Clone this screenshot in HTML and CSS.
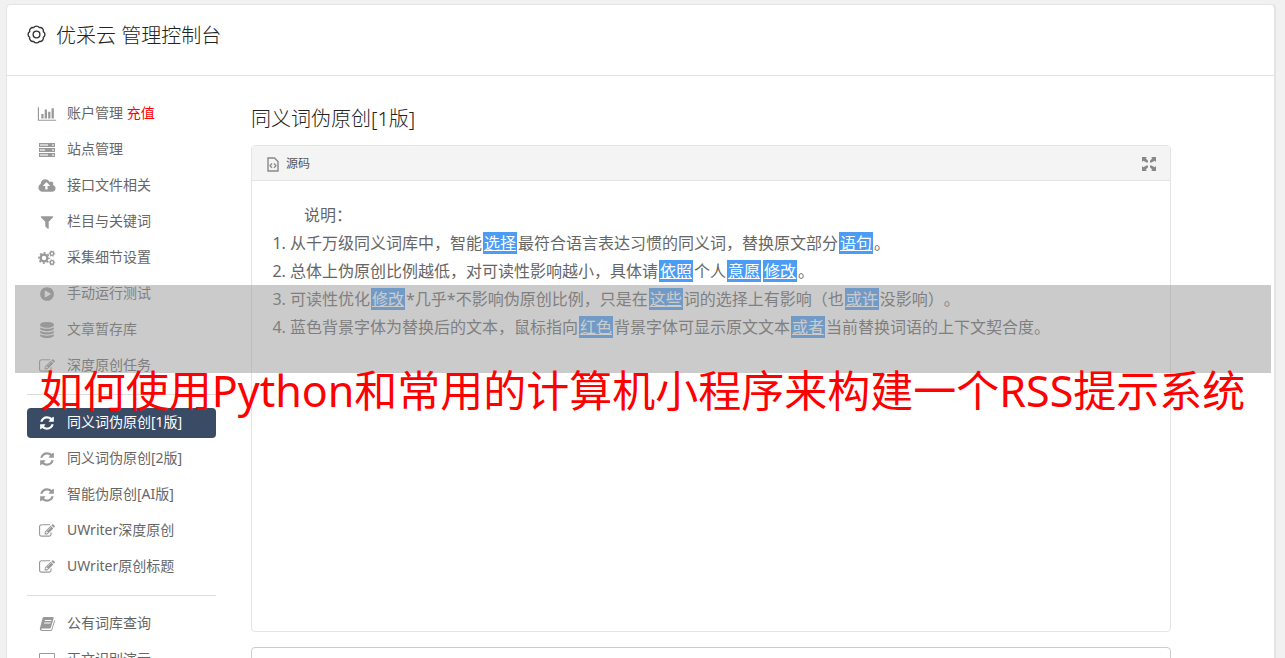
FILE: index.html
```html
<!DOCTYPE html>
<html lang="zh-CN">
<head>
    <meta charset="UTF-8">
    <meta name="viewport" content="width=device-width, initial-scale=1.0">
    <title>优采云 管理控制台</title>
    <link rel="stylesheet" href="styles.css">
</head>
<body>
    <svg class="sprite" aria-hidden="true">
        <symbol id="i-chart" viewBox="0 0 2048 1792"><path d="M640 896v512h-256v-512h256zm384-512v1024h-256v-1024h256zm1024 1152v128h-2048v-1536h128v1408h1920zm-640-896v768h-256v-768h256zm384-384v1152h-256v-1152h256z"/></symbol>
        <symbol id="i-server" viewBox="0 0 18 16"><path fill-rule="evenodd" d="M1 1h16v4H1zM2 2v2h8V2zM1 6h16v4H1zM2 7v2h5V7zM1 11h16v4H1zM2 12v2h8v-2zM14 2h2v2h-2zM14 7h2v2h-2zM14 12h2v2h-2z"/><path opacity=".45" d="M2 2h8v2H2zM2 7h5v2H2zM2 12h8v2H2zM14 2h2v2h-2zM14 7h2v2h-2zM14 12h2v2h-2z"/></symbol>
        <symbol id="i-cloud" viewBox="0 0 1920 1792"><path d="M1280 864q0-14-9-23l-352-352q-9-9-23-9t-23 9l-351 351q-10 12-10 24 0 14 9 23t23 9h224v352q0 13 9.5 22.5t22.5 9.5h192q13 0 22.5-9.5t9.5-22.5v-352h224q13 0 22.5-9.5t9.5-22.5zm640 288q0 159-112.5 271.5t-271.5 112.5h-1088q-185 0-316.5-131.5t-131.5-316.5q0-130 70-240t188-165q-2-30-2-43 0-212 150-362t362-150q156 0 285.5 87t188.5 231q71-62 166-62 106 0 181 75t75 181q0 76-41 138 130 31 213.5 135.5t83.5 238.5z"/></symbol>
        <symbol id="i-filter" viewBox="0 0 1792 1792"><path d="M1595 295q17 41-14 70l-493 493v742q0 42-39 59-13 5-25 5-27 0-45-19l-256-256q-19-19-19-45v-486l-493-493q-31-29-14-70 17-39 59-39h1280q42 0 59 39z"/></symbol>
        <symbol id="i-cogs" viewBox="0 0 18 16">
            <g fill="none" stroke="currentColor">
                <circle cx="6" cy="8" r="3.4" stroke-width="2.4"/>
                <circle cx="6" cy="8" r="5.1" stroke-width="1.6" stroke-dasharray="2 2.005" stroke-dashoffset="1"/>
                <circle cx="14" cy="3.6" r="1.8" stroke-width="1.4"/>
                <circle cx="14" cy="3.6" r="2.8" stroke-width="1" stroke-dasharray="1.3 1.632" stroke-dashoffset=".6"/>
                <circle cx="14" cy="12.4" r="1.8" stroke-width="1.4"/>
                <circle cx="14" cy="12.4" r="2.8" stroke-width="1" stroke-dasharray="1.3 1.632" stroke-dashoffset=".6"/>
            </g>
        </symbol>
        <symbol id="i-play" viewBox="0 0 1792 1792"><path d="M896 128q209 0 385.500 103t279.500 279.500 103 385.500-103 385.500-279.500 279.500-385.500 103-385.500-103-279.500-279.500-103-385.500 103-385.500 279.500-279.500 385.500-103zm384 823q32-18 32-55t-32-55l-544-320q-31-19-64-1-32 19-32 56v640q0 37 32 56 16 8 32 8 17 0 32-9z"/></symbol>
        <symbol id="i-database" viewBox="0 0 1792 1792"><path d="M896 768q237 0 443-43t325-127v170q0 69-103 128t-280 93.5-385 34.5-385-34.5-280-93.5-103-128v-170q119 84 325 127t443 43zm0 768q237 0 443-43t325-127v170q0 69-103 128t-280 93.5-385 34.5-385-34.5-280-93.5-103-128v-170q119 84 325 127t443 43zm0-384q237 0 443-43t325-127v170q0 69-103 128t-280 93.5-385 34.5-385-34.5-280-93.5-103-128v-170q119 84 325 127t443 43zm0-1152q208 0 385 34.5t280 93.5 103 128v128q0 69-103 128t-280 93.5-385 34.5-385-34.5-280-93.5-103-128v-128q0-69 103-128t280-93.5 385-34.5z"/></symbol>
        <symbol id="i-edit" viewBox="0 0 1792 1792"><path d="M888 1184l116-116-152-152-116 116v56h96v96h56zm440-720q-16-16-33 1l-350 350q-17 17-1 33t33-1l350-350q17-17 1-33zm80 594v190q0 119-84.500 203.500t-203.500 84.500h-832q-119 0-203.500-84.500t-84.500-203.500v-832q0-119 84.500-203.500t203.500-84.500h832q63 0 117 25 15 7 18 23 3 17-9 29l-49 49q-14 14-32 8-23-6-45-6h-832q-66 0-113 47t-47 113v832q0 66 47 113t113 47h832q66 0 113-47t47-113v-126q0-13 9-22l64-64q15-15 35-7t20 29zm-96-738l288 288-672 672h-288v-288zm444 132l-92 92-288-288 92-92q28-28 68-28t68 28l152 152q28 28 28 68t-28 68z"/></symbol>
        <symbol id="i-refresh" viewBox="0 0 1792 1792"><path d="M1639 1056q0 5-1 7-64 268-268 434.500t-478 166.500q-146 0-282.500-55t-243.500-157l-129 129q-19 19-45 19t-45-19-19-45v-448q0-26 19-45t45-19h448q26 0 45 19t19 45-19 45l-137 137q71 66 161 102t187 36q134 0 250-65t186-179q11-17 53-117 8-23 30-23h192q13 0 22.500 9.500t9.500 22.500zm25-800v448q0 26-19 45t-45 19h-448q-26 0-45-19t-19-45 19-45l138-138q-148-137-349-137-134 0-250 65t-186 179q-11 17-53 117-8 23-30 23h-199q-13 0-22.500-9.500t-9.500-22.500v-7q65-268 270-434.500t480-166.500q146 0 284 55.500t245 156.500l130-129q19-19 45-19t45 19 19 45z"/></symbol>
        <symbol id="i-book" viewBox="0 0 16 16"><path fill-rule="evenodd" d="M5.200 1h8.300c1 0 1.400.7 1.100 1.600l-2.700 8.800c-.3.800-.8 1.200-1.700 1.200H3c-.6 0-.9.4-.6.9.2.4.6.500 1.200.500h8c.5 0 .8-.2 1-.7L15.300 4c.6.400.7 1 .5 1.600l-2.600 8.300c-.3.800-.8 1.100-1.600 1.100H3.200C1.500 15 .5 13.800.9 12.300L3.500 2.500C3.800 1.500 4.300 1 5.200 1zM6 4l-.3 1h6.500l.3-1zM5.300 6.400l-.3 1h6.500l.3-1z"/></symbol>
        <symbol id="i-laptop" viewBox="0 0 18 16"><path fill-rule="evenodd" d="M2 1h14a1 1 0 0 1 1 1v10a1 1 0 0 1-1 1H2a1 1 0 0 1-1-1V2a1 1 0 0 1 1-1zM2 2v9h14V2zM6 14h6v1H6z"/></symbol>
        <symbol id="i-source" viewBox="0 0 12 15">
            <path fill="none" stroke="currentColor" stroke-width="1.4" d="M1 1h6.500L11 4.500V14H1z"/>
            <path fill="none" stroke="currentColor" stroke-width="1.300" d="M5 6.500L3 8.700l2 2.200M7 6.500l2 2.200-2 2.200"/>
        </symbol>
        <symbol id="i-expand" viewBox="0 0 14 14"><path d="M0 0h5L3.700 1.300 6 3.700V5.500H4.500L1.300 3.700 0 5zM14 0v5l-1.300-1.300L9.500 5.500H8V3.700l2.300-2.400L9 0zM0 14V9l1.300 1.300L4.500 8.500H6v1.800l-2.300 2.400L5 14zM14 14H9l1.300-1.300L8 10.300V8.500h1.500l3.200 1.800L14 9z"/></symbol>
        <symbol id="i-gear" viewBox="0 0 18 18">
            <g fill="none" stroke="currentColor" stroke-width="1.300" stroke-linejoin="round">
                <path d="M15.500 6.300A3.200 3.200 0 0 1 15.500 11.700A3.200 3.200 0 0 1 11.700 15.500A3.200 3.200 0 0 1 6.300 15.500A3.200 3.200 0 0 1 2.500 11.700A3.200 3.200 0 0 1 2.500 6.300A3.200 3.200 0 0 1 6.300 2.500A3.200 3.200 0 0 1 11.700 2.500A3.200 3.200 0 0 1 15.500 6.300z"/>
                <circle cx="9" cy="9" r="3.200"/>
            </g>
        </symbol>
    </svg>

    <div class="wrapper">
        <header class="header">
            <svg class="header-icon"><use href="#i-gear"/></svg>
            <h1>优采云 管理控制台</h1>
        </header>
        <div class="container">
            <nav class="sidebar">
                <a href="#"><svg class="icon"><use href="#i-chart"/></svg><span>账户管理 <em>充值</em></span></a>
                <a href="#"><svg class="icon"><use href="#i-server"/></svg><span>站点管理</span></a>
                <a href="#"><svg class="icon"><use href="#i-cloud"/></svg><span>接口文件相关</span></a>
                <a href="#"><svg class="icon"><use href="#i-filter"/></svg><span>栏目与关键词</span></a>
                <a href="#"><svg class="icon"><use href="#i-cogs"/></svg><span>采集细节设置</span></a>
                <a href="#"><svg class="icon"><use href="#i-play"/></svg><span>手动运行测试</span></a>
                <a href="#"><svg class="icon"><use href="#i-database"/></svg><span>文章暂存库</span></a>
                <a href="#"><svg class="icon"><use href="#i-edit"/></svg><span>深度原创任务</span></a>
                <hr>
                <a href="#" class="active"><svg class="icon"><use href="#i-refresh"/></svg><span>同义词伪原创[1版]</span></a>
                <a href="#"><svg class="icon"><use href="#i-refresh"/></svg><span>同义词伪原创[2版]</span></a>
                <a href="#"><svg class="icon"><use href="#i-refresh"/></svg><span>智能伪原创[AI版]</span></a>
                <a href="#"><svg class="icon"><use href="#i-edit"/></svg><span>UWriter深度原创</span></a>
                <a href="#"><svg class="icon"><use href="#i-edit"/></svg><span>UWriter原创标题</span></a>
                <hr>
                <a href="#"><svg class="icon"><use href="#i-book"/></svg><span>公有词库查询</span></a>
                <a href="#"><svg class="icon"><use href="#i-laptop"/></svg><span>正文识别演示</span></a>
            </nav>
            <main class="content">
                <h2>同义词伪原创[1版]</h2>
                <section class="editor">
                    <div class="toolbar">
                        <button type="button"><svg class="source-icon"><use href="#i-source"/></svg>源码</button>
                        <button type="button" aria-label="全屏"><svg class="expand-icon"><use href="#i-expand"/></svg></button>
                    </div>
                    <div class="editor-body">
                        <p>说明：</p>
                        <ol>
                            <li>从千万级同义词库中，智能<span class="word">选择</span>最符合语言表达习惯的同义词，替换原文部分<span class="word">语句</span>。</li>
                            <li>总体上伪原创比例越低，对可读性影响越小，具体请<span class="word">依照</span>个人<span class="word">意愿</span><span class="word">修改</span>。</li>
                            <li>可读性优化<span class="word">修改</span>*几乎*不影响伪原创比例，只是在<span class="word">这些</span>词的选择上有影响（也<span class="word">或许</span>没影响）。</li>
                            <li>蓝色背景字体为替换后的文本，鼠标指向<span class="word">红色</span>背景字体可显示原文文本<span class="word">或者</span>当前替换词语的上下文契合度。</li>
                        </ol>
                    </div>
                </section>
                <textarea class="result" aria-label="结果"></textarea>
            </main>
        </div>
    </div>

    <div class="banner"></div>
    <div class="banner-title">如何使用Python和常用的计算机小程序来构建一个RSS提示系统</div>
</body>
</html>
```

FILE: styles.css
```css
* {
    box-sizing: border-box;
}

body {
    font-family: "Noto Sans", "Noto Sans CJK SC", sans-serif;
    margin: 0;
    padding: 4px 10px 0 6px;
    height: 100vh;
    overflow: hidden;
    background-color: #f1f1f1;
    color: #666;
    position: relative;
    text-spacing-trim: space-all;
}

h1, h2, p, ol {
    margin: 0;
}

.sprite {
    display: none;
}

svg {
    fill: currentColor;
}

.wrapper {
    background-color: #fff;
    border: 1px solid #e4e4e4;
    border-radius: 4px;
    box-shadow: 1px 0 0 #e4e4e4;
}

.header {
    display: flex;
    align-items: flex-start;
    gap: 10px;
    height: 71px;
    padding: 17px 20px;
    border-bottom: 1px solid #e4e4e4;
    color: #222;
}

.header h1 {
    font-size: 20px;
    font-weight: 300;
    line-height: 28px;
}

.header-icon {
    width: 19px;
    height: 19px;
    margin-top: 3px;
    color: #333;
}

.container {
    display: grid;
    grid-template-columns: 189px 1fr;
    gap: 35px;
    padding: 23px 103px 20px 20px;
}

.sidebar {
    display: flex;
    flex-direction: column;
    gap: 6px;
}

.sidebar a {
    display: flex;
    align-items: center;
    gap: 10px;
    height: 30px;
    padding: 0 10px;
    border-radius: 4px;
    font-size: 14px;
    color: #666;
    text-decoration: none;
}

.sidebar span {
    line-height: 20px;
    padding-bottom: 2px;
}

.sidebar em {
    color: #f00;
    font-style: normal;
}

.sidebar hr {
    width: 100%;
    margin: 7px 0;
    border: 0;
    border-top: 1px solid #ddd;
}

.sidebar .icon {
    width: 20px;
    height: 16px;
    color: #999;
}

.sidebar .active {
    background-color: #3a4b66;
    color: #fff;
}

.sidebar .active .icon {
    color: #fff;
}

.content h2 {
    font-size: 20px;
    font-weight: 300;
    line-height: 28px;
    margin: 6px 0 12px;
    color: #222;
}

.editor {
    border: 1px solid #e4e4e4;
    border-radius: 4px;
}

.toolbar {
    display: flex;
    justify-content: space-between;
    align-items: center;
    height: 35px;
    padding: 0 14px 0 15px;
    background-color: #f4f4f4;
    border-bottom: 1px solid #e4e4e4;
}

.toolbar button {
    display: flex;
    align-items: center;
    gap: 7px;
    padding: 2px 0 0;
    border: 0;
    background: none;
    font: inherit;
    font-size: 12px;
    line-height: 16px;
    color: #555;
    cursor: pointer;
}

.toolbar svg {
    color: #888;
}

.source-icon {
    width: 12px;
    height: 15px;
}

.expand-icon {
    width: 14px;
    height: 14px;
}

.editor-body {
    min-height: 450px;
    padding: 20px;
    font-size: 16px;
    line-height: 28px;
}

.editor-body p {
    text-indent: 2em;
}

.editor-body ol {
    padding-left: 18px;
}

.word {
    margin: 0 1px;
    padding: 0 1px;
    background-color: #4a9cf5;
    color: #fff;
    text-decoration: underline;
}

.result {
    display: block;
    width: 100%;
    height: 200px;
    margin-top: 15px;
    border: 1px solid #ccc;
    border-radius: 4px;
    resize: none;
}

/* banner laid over the console */
.banner {
    position: absolute;
    top: 285px;
    left: 15px;
    right: 14px;
    height: 88px;
    background-color: rgba(151, 151, 151, 0.5);
}

.banner-title {
    position: absolute;
    top: 359px;
    left: 0;
    right: 0;
    font-size: 43px;
    line-height: 64px;
    text-align: center;
    white-space: nowrap;
    color: #f00;
}
```
